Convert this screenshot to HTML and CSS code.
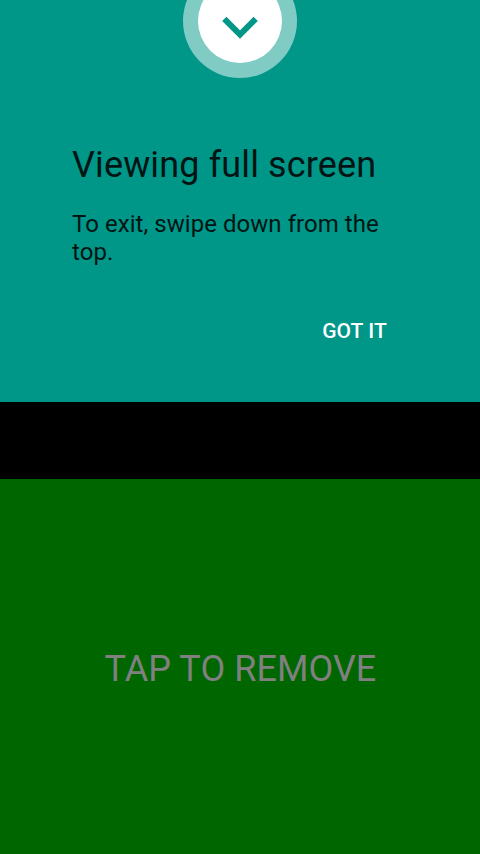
FILE: index.html
```
<!DOCTYPE html>
<html lang="en">
<head>
<meta charset="utf-8">
<title>Viewing full screen</title>
<link rel="stylesheet" href="styles.css">
</head>
<body>
<section class="notice">
  <svg class="handle" width="114" height="78" viewBox="0 0 114 78" aria-hidden="true">
    <circle class="halo" cx="57" cy="21" r="57"/>
    <circle class="disc" cx="57" cy="21" r="42"/>
    <path class="chevron" d="M41.300 18.900L57 34.600L72.700 18.900"/>
  </svg>
  <div class="message">
    <h1 class="title">Viewing full screen</h1>
    <p class="text">To exit, swipe down from the top.</p>
    <button class="confirm">GOT IT</button>
  </div>
</section>
<main class="panel"><span class="label">TAP TO REMOVE</span></main>
</body>
</html>
```

FILE: styles.css
```
body {
  margin: 0;
  height: 854px;
  display: flex;
  flex-direction: column;
  background: #000;
  font-family: Roboto, sans-serif;
  overflow: hidden;
}
.notice {
  height: 402px;
  background: #009688;
  display: flex;
  flex-direction: column;
  align-items: center;
}
.handle { display: block; }
.halo { fill: #fff; fill-opacity: 0.5; }
.disc { fill: #fff; }
.chevron { fill: none; stroke: #009688; stroke-width: 6; }
.message {
  width: 336px;
  padding-top: 66px;
  display: flex;
  flex-direction: column;
  color: #001513;
}
.title { margin: 0; font-size: 36px; line-height: 42px; font-weight: 400; letter-spacing: 0.13px; white-space: nowrap; }
.text { margin: 24px 0 0; font-size: 24px; line-height: 28px; letter-spacing: 0.05px; }
.confirm {
  align-self: flex-end;
  margin: 53px 21px 0 0;
  padding: 0;
  border: 0;
  background: none;
  color: #fff;
  font: 500 21px/24px Roboto, sans-serif;
  letter-spacing: 0.1px;
}
.panel {
  box-sizing: border-box;
  margin-top: 77px;
  padding: 4px 0 0 1px;
  flex: 1;
  background: #006600;
  display: flex;
  align-items: center;
  justify-content: center;
}
.label { color: #808080; font-size: 36px; line-height: 42px; letter-spacing: 0.06px; }
```
